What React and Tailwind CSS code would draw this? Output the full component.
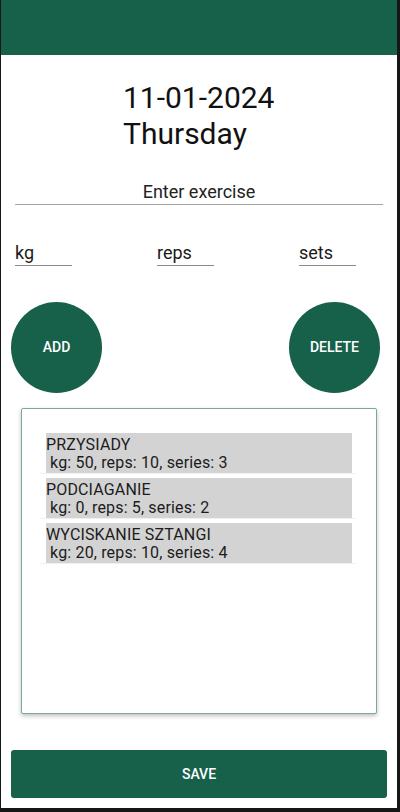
import React from "react";

const items = [
  { name: "PRZYSIADY", detail: " kg: 50, reps: 10, series: 3" },
  { name: "PODCIAGANIE", detail: " kg: 0, reps: 5, series: 2" },
  { name: "WYCISKANIE SZTANGI", detail: " kg: 20, reps: 10, series: 4" },
];

export default function App() {
  return (
    <div className="w-[400px] h-[812px] bg-[#161616] overflow-hidden" style={{ fontFamily: "Roboto, 'Noto Sans', sans-serif" }}>
      <div className="ml-[1px] w-[396px] h-[808px] bg-white flex flex-col">
        <div className="h-[55px] bg-[#17614b] shrink-0" />
        <div className="mt-[25px] pl-[122px] text-[30px] leading-[36px] text-[#111]">
          <div>11-01-2024</div>
          <div>Thursday</div>
        </div>
        <div className="mt-[28px] ml-[14px] w-[368px] h-[25px] border-b border-[#a6a6a6] text-center text-[18px] leading-[24px] text-[#222]">
          Enter exercise
        </div>
        <div className="mt-[36px] pl-[14px] flex gap-[85px]">
          {["kg", "reps", "sets"].map((l) => (
            <div key={l} className="w-[57px] h-[25px] border-b border-[#8a8a8a] text-[18px] leading-[24px] text-[#1a1a1a]">
              {l}
            </div>
          ))}
        </div>
        <div className="mt-[36px] pl-[10px] pr-[17px] flex justify-between">
          <div className="w-[91px] h-[91px] rounded-full bg-[#17614b] flex items-center justify-center text-white text-[14px] font-medium">
            ADD
          </div>
          <div className="w-[91px] h-[91px] rounded-full bg-[#17614b] flex items-center justify-center text-white text-[14px] font-medium">
            DELETE
          </div>
        </div>
        <div className="mt-[15px] ml-[20px] w-[356px] h-[306px] border border-[#7ba898] rounded-[2px] bg-white shadow-[0_2px_4px_rgba(0,0,0,0.25)] pt-[24px] flex flex-col gap-[4px]">
          {items.map((it) => (
            <div key={it.name} className="ml-[18px] mr-[20px] pl-[6px] pr-[4px] border-b border-[#f0f0f0]">
              <div className="h-[40px] bg-[#d3d3d3] pt-[3px] text-[16px] leading-[18px] text-[#1c1c1c] whitespace-pre tracking-[0.15px]">
                <div>{it.name}</div>
                <div>{it.detail}</div>
              </div>
            </div>
          ))}
        </div>
        <div className="mt-[36px] ml-[10px] w-[376px] h-[48px] rounded-[3px] bg-[#17614b] flex items-center justify-center text-white text-[14px] font-medium">
          SAVE
        </div>
      </div>
    </div>
  );
}
